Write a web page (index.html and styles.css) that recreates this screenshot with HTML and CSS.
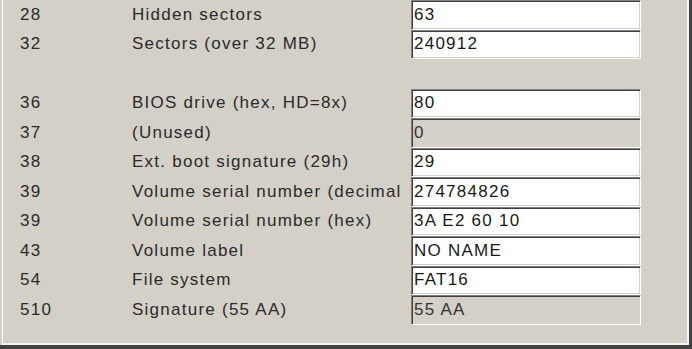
FILE: index.html
```html
<!DOCTYPE html>
<html lang="en">
<head>
    <meta charset="UTF-8">
    <title>Boot Sector</title>
    <link rel="stylesheet" href="styles.css">
</head>
<body>
    <div class="frame">
        <div class="panel">
            <div class="fields">
                <div class="offset">28</div>
                <div class="label">Hidden sectors</div>
                <div class="value">63</div>

                <div class="offset">32</div>
                <div class="label">Sectors (over 32 MB)</div>
                <div class="value">240912</div>

                <div class="gap"></div>

                <div class="offset">36</div>
                <div class="label">BIOS drive (hex, HD=8x)</div>
                <div class="value">80</div>

                <div class="offset">37</div>
                <div class="label">(Unused)</div>
                <div class="value disabled">0</div>

                <div class="offset">38</div>
                <div class="label">Ext. boot signature (29h)</div>
                <div class="value">29</div>

                <div class="offset">39</div>
                <div class="label">Volume serial number (decimal)</div>
                <div class="value">274784826</div>

                <div class="offset">39</div>
                <div class="label">Volume serial number (hex)</div>
                <div class="value">3A E2 60 10</div>

                <div class="offset">43</div>
                <div class="label">Volume label</div>
                <div class="value">NO NAME</div>

                <div class="offset">54</div>
                <div class="label">File system</div>
                <div class="value">FAT16</div>

                <div class="offset">510</div>
                <div class="label">Signature (55 AA)</div>
                <div class="value disabled">55 AA</div>
            </div>
        </div>
    </div>
</body>
</html>
```

FILE: styles.css
```css
* {
    margin: 0;
    padding: 0;
    box-sizing: border-box;
}

body {
    width: 692px;
    height: 349px;
    overflow: hidden;
    background: #d4d0c8;
    font-family: 'Liberation Sans', Arial, sans-serif;
    font-size: 17px;
    letter-spacing: 1.25px;
    color: #2a2a2a;
}

.frame {
    height: 349px;
    padding-left: 2px;
    border-right: 3px solid #404040;
    border-bottom: 4px solid #404040;
}

.panel {
    height: 100%;
    border-left: 1px solid #ffffff;
    border-right: 2px solid #f4f4f4;
    border-bottom: 2px solid #f4f4f4;
}

.fields {
    display: grid;
    grid-template-columns: 112px 279px 230px;
    grid-auto-rows: 29.5px;
    padding-left: 17px;
}

.offset,
.label {
    display: flex;
    align-items: center;
    white-space: nowrap;
    overflow: hidden;
}

/* long labels get cut just before the edit box */
.label {
    margin-right: 10px;
}

.gap {
    grid-column: 1 / -1;
}

.value {
    display: flex;
    align-items: center;
    padding-left: 2px;
    background: #ffffff;
    color: #1a1a1a;
    border-top: 1px solid #808080;
    border-left: 1px solid #808080;
    border-right: 1px solid #ffffff;
    border-bottom: 1px solid #ffffff;
    box-shadow: inset 1px 1px 0 #404040, inset -1px -1px 0 #d4d0c8;
    white-space: nowrap;
}

.value.disabled {
    background: #d4d0c8;
    color: #333333;
}
```
